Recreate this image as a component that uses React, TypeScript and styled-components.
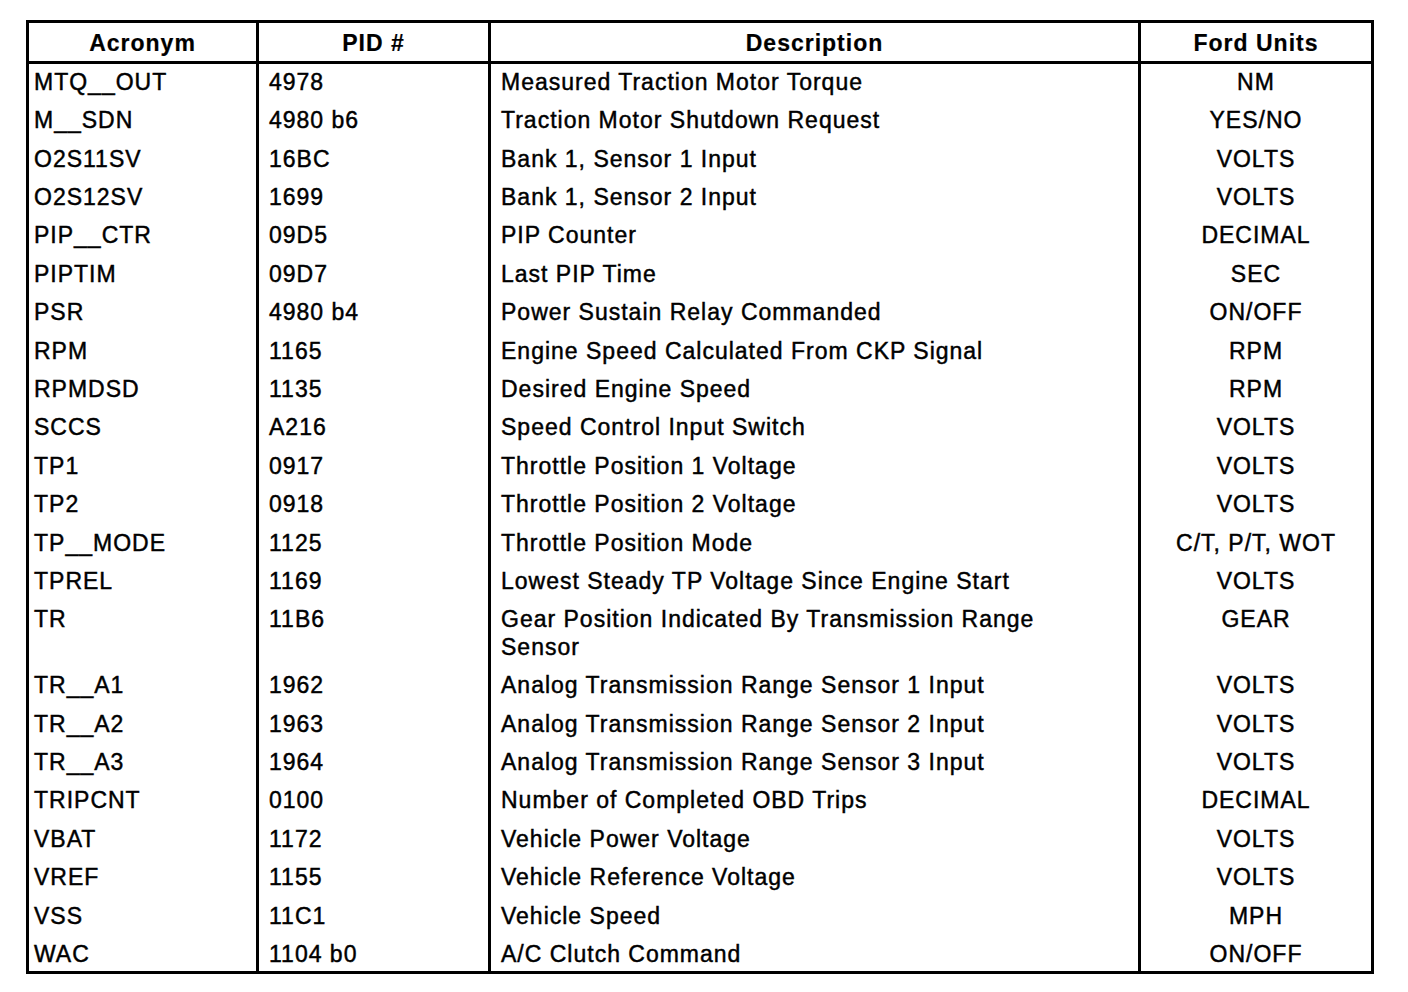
import React from "react";
import styled, { createGlobalStyle } from "styled-components";

const GlobalStyle = createGlobalStyle`
  html, body {
    margin: 0;
    padding: 0;
    background: #ffffff;
  }
  body {
    font-family: "Liberation Sans", Arial, Helvetica, sans-serif;
    color: #000;
  }
`;

const Page = styled.div`
  width: 1408px;
  height: 992px;
  padding: 20px 0 0 26px;
  box-sizing: border-box;
  background: #fff;
`;

const Table = styled.table`
  width: 1345px;
  table-layout: fixed;
  border-collapse: collapse;
  border: 3px solid #000;
  font-family: "Liberation Sans", Arial, Helvetica, sans-serif;
  font-size: 23px;
  letter-spacing: 1px;
  color: #000;
  -webkit-text-stroke: 0.45px #000;
`;

const HeadCell = styled.th<{ $last?: boolean }>`
  height: 36px;
  padding: 2px 6px 0;
  font-weight: bold;
  text-align: center;
  vertical-align: middle;
  line-height: 26px;
  -webkit-text-stroke: 0.2px #000;
  border-bottom: 3px solid #000;
  border-right: ${(p) => (p.$last ? "none" : "3px solid #000")};
`;

const BodyRow = styled.tr`
  &:last-child > td {
    padding-bottom: 3px;
  }
`;

const Cell = styled.td<{ $align?: "left" | "center"; $padLeft?: number; $last?: boolean }>`
  padding: 4.9px 6px 6px ${(p) => p.$padLeft ?? 10}px;
  line-height: 27.5px;
  vertical-align: top;
  text-align: ${(p) => p.$align ?? "left"};
  white-space: nowrap;
  border-right: ${(p) => (p.$last ? "none" : "3px solid #000")};
`;

type Row = { acr: string; pid: string; desc: React.ReactNode; units: string };

const rows: Row[] = [
  { acr: "MTQ__OUT", pid: "4978", desc: "Measured Traction Motor Torque", units: "NM" },
  { acr: "M__SDN", pid: "4980 b6", desc: "Traction Motor Shutdown Request", units: "YES/NO" },
  { acr: "O2S11SV", pid: "16BC", desc: "Bank 1, Sensor 1 Input", units: "VOLTS" },
  { acr: "O2S12SV", pid: "1699", desc: "Bank 1, Sensor 2 Input", units: "VOLTS" },
  { acr: "PIP__CTR", pid: "09D5", desc: "PIP Counter", units: "DECIMAL" },
  { acr: "PIPTIM", pid: "09D7", desc: "Last PIP Time", units: "SEC" },
  { acr: "PSR", pid: "4980 b4", desc: "Power Sustain Relay Commanded", units: "ON/OFF" },
  { acr: "RPM", pid: "1165", desc: "Engine Speed Calculated From CKP Signal", units: "RPM" },
  { acr: "RPMDSD", pid: "1135", desc: "Desired Engine Speed", units: "RPM" },
  { acr: "SCCS", pid: "A216", desc: "Speed Control Input Switch", units: "VOLTS" },
  { acr: "TP1", pid: "0917", desc: "Throttle Position 1 Voltage", units: "VOLTS" },
  { acr: "TP2", pid: "0918", desc: "Throttle Position 2 Voltage", units: "VOLTS" },
  { acr: "TP__MODE", pid: "1125", desc: "Throttle Position Mode", units: "C/T, P/T, WOT" },
  { acr: "TPREL", pid: "1169", desc: "Lowest Steady TP Voltage Since Engine Start", units: "VOLTS" },
  {
    acr: "TR",
    pid: "11B6",
    desc: (
      <>
        Gear Position Indicated By Transmission Range
        <br />
        Sensor
      </>
    ),
    units: "GEAR",
  },
  { acr: "TR__A1", pid: "1962", desc: "Analog Transmission Range Sensor 1 Input", units: "VOLTS" },
  { acr: "TR__A2", pid: "1963", desc: "Analog Transmission Range Sensor 2 Input", units: "VOLTS" },
  { acr: "TR__A3", pid: "1964", desc: "Analog Transmission Range Sensor 3 Input", units: "VOLTS" },
  { acr: "TRIPCNT", pid: "0100", desc: "Number of Completed OBD Trips", units: "DECIMAL" },
  { acr: "VBAT", pid: "1172", desc: "Vehicle Power Voltage", units: "VOLTS" },
  { acr: "VREF", pid: "1155", desc: "Vehicle Reference Voltage", units: "VOLTS" },
  { acr: "VSS", pid: "11C1", desc: "Vehicle Speed", units: "MPH" },
  { acr: "WAC", pid: "1104 b0", desc: "A/C Clutch Command", units: "ON/OFF" },
];

export default function App() {
  return (
    <Page>
      <GlobalStyle />
      <Table>
        <colgroup>
          <col style={{ width: 230 }} />
          <col style={{ width: 232 }} />
          <col style={{ width: 650 }} />
          <col style={{ width: 233 }} />
        </colgroup>
        <thead>
          <tr>
            <HeadCell>Acronym</HeadCell>
            <HeadCell>PID #</HeadCell>
            <HeadCell>Description</HeadCell>
            <HeadCell $last>Ford Units</HeadCell>
          </tr>
        </thead>
        <tbody>
          {rows.map((r) => (
            <BodyRow key={r.acr}>
              <Cell $padLeft={5}>{r.acr}</Cell>
              <Cell $padLeft={10}>{r.pid}</Cell>
              <Cell $padLeft={10}>{r.desc}</Cell>
              <Cell $align="center" $padLeft={6} $last>
                {r.units}
              </Cell>
            </BodyRow>
          ))}
        </tbody>
      </Table>
    </Page>
  );
}
